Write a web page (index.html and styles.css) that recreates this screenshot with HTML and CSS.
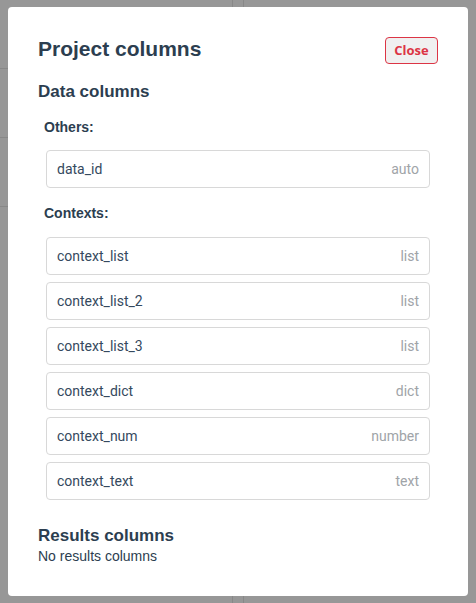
FILE: index.html
```html
<!DOCTYPE html>
<html>
<head>
<meta charset="utf-8">
<link rel="stylesheet" href="styles.css">
</head>
<body>
<div class="backdrop">
  <div class="bg-col bg-left">
    <div class="bg-cell"></div>
    <div class="bg-cell"></div>
    <div class="bg-cell"></div>
  </div>
  <div class="bg-col bg-mid"></div>
  <div class="bg-col bg-right"></div>
</div>
<div class="modal">
  <div class="modal-header">
    <h1 class="title">Project columns</h1>
    <button class="btn-close">Close</button>
  </div>
  <h2 class="section-title">Data columns</h2>
  <div class="group-label">Others:</div>
  <div class="rows rows-first">
    <div class="row"><span class="name">data_id</span><span class="type">auto</span></div>
  </div>
  <div class="group-label">Contexts:</div>
  <div class="rows">
    <div class="row"><span class="name">context_list</span><span class="type">list</span></div>
    <div class="row"><span class="name">context_list_2</span><span class="type">list</span></div>
    <div class="row"><span class="name">context_list_3</span><span class="type">list</span></div>
    <div class="row"><span class="name">context_dict</span><span class="type">dict</span></div>
    <div class="row"><span class="name">context_num</span><span class="type">number</span></div>
    <div class="row"><span class="name">context_text</span><span class="type">text</span></div>
  </div>
  <h2 class="section-title results-title">Results columns</h2>
  <div class="empty">No results columns</div>
</div>
</body>
</html>
```
FILE: styles.css
```css
* { box-sizing: border-box; }
html, body { margin: 0; padding: 0; }
body {
  width: 476px;
  height: 603px;
  overflow: hidden;
  background: #979797;
  position: relative;
  font-family: "Liberation Sans", Arial, sans-serif;
}
.backdrop {
  position: absolute;
  inset: 0;
  display: flex;
}
.bg-col { height: 100%; }
.bg-left {
  width: 232px;
  display: flex;
  flex-direction: column;
}
.bg-cell {
  height: 69px;
  border-bottom: 1px solid #888;
}
.bg-mid {
  width: 12px;
  border-left: 1px solid #888;
  border-right: 1px solid #888;
}
.bg-right { flex: 1; }
.modal {
  position: absolute;
  left: 8px;
  top: 7px;
  width: 460px;
  height: 589px;
  background: #fff;
  border-radius: 4px;
  padding: 30px 30px;
  color: #2c3e50;
}
.modal-header {
  display: flex;
  justify-content: space-between;
  align-items: flex-start;
}
.title {
  margin: 0;
  font-size: 21px;
  font-weight: bold;
  line-height: 24px;
  padding-top: 0;
}
.btn-close {
  margin-top: 0;
  width: 53px;
  height: 27px;
  border: 1px solid #dc3545;
  border-radius: 4px;
  background: #f0f0f0;
  color: #dc3545;
  font-family: "Open Sans", sans-serif;
  font-weight: 700;
  font-size: 13px;
  padding: 0;
  line-height: 25px;
}
.section-title {
  margin: 18px 0 0;
  font-size: 17px;
  font-weight: bold;
  line-height: 20px;
}
.group-label {
  margin: 17px 0 0 6px;
  font-size: 14px;
  font-weight: bold;
  line-height: 16px;
}
.rows {
  margin: 16px 8px 0;
  display: flex;
  flex-direction: column;
  gap: 7px;
}
.rows-first { margin-top: 15px; }
.row {
  height: 38px;
  border: 1px solid #d8d8d8;
  border-radius: 4px;
  display: flex;
  justify-content: space-between;
  align-items: center;
  padding: 0 10px;
  font-family: Roboto, sans-serif;
  font-size: 14px;
}
.name { color: #35495e; }
.type { color: #a0a4a8; }
.results-title { margin-top: 26px; }
.empty {
  font-size: 14px;
  line-height: 18px;
  margin-top: 1px;
}
```
